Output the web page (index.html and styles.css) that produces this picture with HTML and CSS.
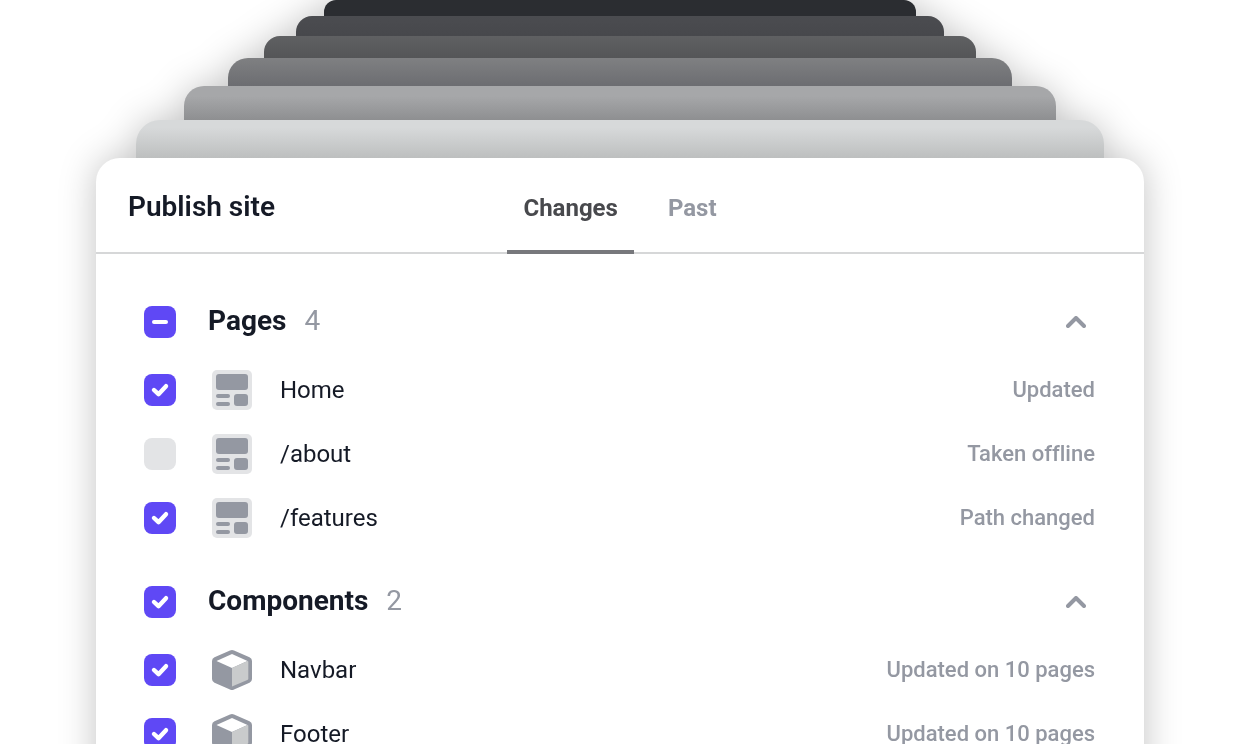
FILE: index.html
```html
<!doctype html>
<html lang="en">
  <head>
    <meta charset="UTF-8" />
    <meta name="viewport" content="width=device-width, initial-scale=1.0" />
    <title>Publish site</title>
    <link rel="stylesheet" href="styles.css">
  </head>
  <body>
    <svg class="sprite" aria-hidden="true">
      <symbol id="icon-page" viewBox="0 0 40 40">
        <rect width="40" height="40" rx="5" fill="#e3e4e6" />
        <g fill="#9498a2">
          <rect x="4" y="4" width="32" height="16" rx="3" />
          <rect x="4" y="24" width="14" height="4" rx="2" />
          <rect x="4" y="32" width="14" height="4" rx="2" />
          <rect x="22" y="24" width="14" height="12" rx="3" />
        </g>
      </symbol>
      <symbol id="icon-cube" viewBox="0 0 40 40">
        <path fill="#9498a2" d="M18 .5q2-1 4 0l15.500 6.800q2.500 1.200 2.500 3.700v18q0 2.500-2.500 3.700L22 39.500q-2 1-4 0L2.500 32.700Q0 31.500 0 29V11q0-2.500 2.500-3.700z" />
        <path fill="#fff" d="M20 4l15.500 7L20 18 4.500 11z" />
        <path fill="#c9cbcc" d="M20 18l15.500-7q.8 0 .8 1v16.500q0 1-1 1.500L20 36.500z" />
      </symbol>
      <symbol id="icon-chevron" viewBox="0 0 20 12">
        <path fill="none" stroke="#9498a2" stroke-width="4" stroke-linecap="round" stroke-linejoin="round" d="M2 10l8-8 8 8" />
      </symbol>
    </svg>

    <main class="stage">
      <div class="stack">
        <div class="layer layer-6"></div>
        <div class="layer layer-5"></div>
        <div class="layer layer-4"></div>
        <div class="layer layer-3"></div>
        <div class="layer layer-2"></div>
        <div class="layer layer-1"></div>

        <div class="panel">
          <header class="panel-header">
            <h1>Publish site</h1>
            <nav class="tabs">
              <button type="button" class="tab active">Changes</button>
              <button type="button" class="tab">Past</button>
            </nav>
          </header>

          <div class="groups">
            <section class="group">
              <div class="group-header">
                <input type="checkbox" class="checkbox group-check" id="pages" />
                <h2><label for="pages">Pages</label> <span class="count">4</span></h2>
                <button type="button" class="toggle" aria-label="Collapse pages" aria-expanded="true">
                  <svg><use href="#icon-chevron" /></svg>
                </button>
              </div>
              <ul class="items">
                <li class="item">
                  <input type="checkbox" class="checkbox" id="home" checked />
                  <svg class="icon"><use href="#icon-page" /></svg>
                  <label for="home">Home</label>
                  <span class="status">Updated</span>
                </li>
                <li class="item">
                  <input type="checkbox" class="checkbox" id="about" />
                  <svg class="icon"><use href="#icon-page" /></svg>
                  <label for="about">/about</label>
                  <span class="status">Taken offline</span>
                </li>
                <li class="item">
                  <input type="checkbox" class="checkbox" id="features" checked />
                  <svg class="icon"><use href="#icon-page" /></svg>
                  <label for="features">/features</label>
                  <span class="status">Path changed</span>
                </li>
              </ul>
            </section>

            <section class="group">
              <div class="group-header">
                <input type="checkbox" class="checkbox group-check" id="components" checked />
                <h2><label for="components">Components</label> <span class="count">2</span></h2>
                <button type="button" class="toggle" aria-label="Collapse components" aria-expanded="true">
                  <svg><use href="#icon-chevron" /></svg>
                </button>
              </div>
              <ul class="items">
                <li class="item">
                  <input type="checkbox" class="checkbox" id="navbar" checked />
                  <svg class="icon"><use href="#icon-cube" /></svg>
                  <label for="navbar">Navbar</label>
                  <span class="status">Updated on 10 pages</span>
                </li>
                <li class="item">
                  <input type="checkbox" class="checkbox" id="footer" checked />
                  <svg class="icon"><use href="#icon-cube" /></svg>
                  <label for="footer">Footer</label>
                  <span class="status">Updated on 10 pages</span>
                </li>
              </ul>
            </section>
          </div>
        </div>
      </div>
    </main>

    <script>
      document.querySelectorAll(".group").forEach((group) => {
        const parent = group.querySelector(".group-check");
        const children = [...group.querySelectorAll(".item .checkbox")];
        const toggle = group.querySelector(".toggle");

        function updateParent() {
          const checked = children.filter((c) => c.checked).length;
          parent.checked = checked === children.length;
          parent.indeterminate = checked > 0 && checked < children.length;
        }

        parent.addEventListener("change", () => {
          children.forEach((c) => (c.checked = parent.checked));
        });
        children.forEach((c) => c.addEventListener("change", updateParent));

        toggle.addEventListener("click", () => {
          const closed = group.classList.toggle("closed");
          toggle.setAttribute("aria-expanded", String(!closed));
        });

        updateParent();
      });
    </script>
  </body>
</html>
```

FILE: styles.css
```css
* {
  box-sizing: border-box;
}
body {
  margin: 0;
  background: #fff;
  color: #151a26;
  font-family: Roboto, Arial, sans-serif;
  font-size: 24px;
  font-variant-ligatures: none;
}
h1,
h2,
ul {
  margin: 0;
  padding: 0;
}
button {
  border: 0;
  background: none;
  font-family: inherit;
  cursor: pointer;
}
.sprite {
  display: none;
}
.stage {
  height: 100vh;
  padding: 0 96px;
  overflow: hidden;
}
.stack {
  filter: drop-shadow(0 0 18px rgba(0, 0, 0, 0.24));
}

/* Older versions piled up behind the panel */
.layer {
  border-radius: 20px 20px 0 0;
}
.layer-6 {
  height: 16px;
  margin: 0 228px;
  border-radius: 12px 12px 0 0;
  background: #2b2d31;
}
.layer-5 {
  height: 20px;
  margin: 0 200px;
  border-radius: 16px 16px 0 0;
  background: linear-gradient(#4b4c50, #47484c);
}
.layer-4 {
  height: 22px;
  margin: 0 168px;
  border-radius: 16px 16px 0 0;
  background: linear-gradient(#5f6062, #545557);
}
.layer-3 {
  height: 28px;
  margin: 0 132px;
  background: linear-gradient(#7f8082, #6c6d71);
}
.layer-2 {
  height: 34px;
  margin: 0 88px;
  background: linear-gradient(#a6a7a9 30%, #8e8f91);
}
.layer-1 {
  height: 38px;
  margin: 0 40px;
  border-radius: 24px 24px 0 0;
  background: linear-gradient(#d7d9da 20%, #bdbfbf);
}

.panel {
  min-height: 100vh;
  border-radius: 24px 24px 0 0;
  background: #fff;
}
.panel-header {
  display: grid;
  grid-template-columns: 1fr auto 1fr;
  align-items: center;
  height: 96px;
  padding: 0 32px;
  border-bottom: 2px solid #d6d7d8;
}
h1 {
  font-size: 28px;
  font-weight: 600;
}
.tabs {
  display: flex;
  gap: 18px;
  height: 96px;
}
.tab {
  padding: 8px 16px 0;
  border-bottom: 4px solid transparent;
  color: #9498a2;
  font-size: 24px;
  font-weight: 700;
}
.tab.active {
  border-color: #77787c;
  color: #48494d;
}

.groups {
  display: flex;
  flex-direction: column;
  gap: 16px;
  padding: 32px 48px;
}
.group-header {
  display: flex;
  align-items: center;
  gap: 32px;
  height: 72px;
}
h2 {
  display: flex;
  flex: 1;
  gap: 18px;
  padding-bottom: 4px;
  font-size: 28px;
  font-weight: 700;
}
.count {
  color: #9498a2;
  font-weight: 400;
}
.toggle {
  display: flex;
  align-items: center;
  justify-content: center;
  width: 40px;
  height: 40px;
  padding: 0;
}
.toggle svg {
  width: 20px;
  height: 12px;
}
.closed .toggle svg {
  transform: rotate(180deg);
}
.closed .items {
  display: none;
}
.items {
  list-style: none;
}
.item {
  display: flex;
  align-items: center;
  height: 64px;
}
.icon {
  width: 40px;
  height: 40px;
  margin: 0 28px 0 36px;
}
.item label {
  flex: 1;
}
.status {
  padding: 0 1px 2px 0;
  color: #9498a2;
  font-size: 22px;
  font-weight: 500;
}

.checkbox {
  flex: none;
  appearance: none;
  width: 32px;
  height: 32px;
  margin: 0;
  border-radius: 8px;
  background: #e3e4e6;
  cursor: pointer;
}
.checkbox:checked {
  background: #5f48f5 url("data:image/svg+xml,%3Csvg xmlns='http://www.w3.org/2000/svg' viewBox='0 0 32 32'%3E%3Cpath d='M10 16l4.500 4.200 7.500-8' fill='none' stroke='%23fff' stroke-width='4.400' stroke-linecap='round' stroke-linejoin='round'/%3E%3C/svg%3E");
}
.checkbox:indeterminate {
  background: #5f48f5 url("data:image/svg+xml,%3Csvg xmlns='http://www.w3.org/2000/svg' viewBox='0 0 32 32'%3E%3Crect x='8' y='14' width='16' height='4' rx='2' fill='%23fff'/%3E%3C/svg%3E");
}
```
